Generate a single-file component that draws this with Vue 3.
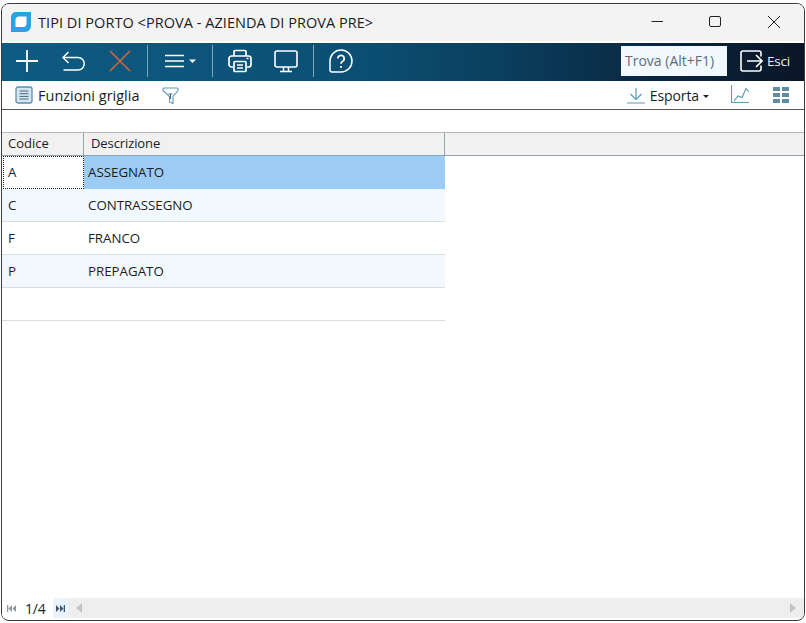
<script setup>
const rows = [
  { code: 'A', text: 'ASSEGNATO' },
  { code: 'C', text: 'CONTRASSEGNO' },
  { code: 'F', text: 'FRANCO' },
  { code: 'P', text: 'PREPAGATO' },
  { code: '', text: '' },
]
</script>

<template>
  <div class="window">
    <header class="titlebar">
      <svg class="logo" width="20" height="20" viewBox="0 0 20 20">
        <path fill="#2aa3e6" d="M5 0h15v14a6 6 0 0 1-6 6H0V5a5 5 0 0 1 5-5z" />
        <path fill="#fff" d="M8 4.500h7.500v7a3.500 3.500 0 0 1-3.500 3.500H4.500V8A3.500 3.500 0 0 1 8 4.500z" />
      </svg>
      <span class="title">TIPI DI PORTO &lt;PROVA - AZIENDA DI PROVA PRE&gt;</span>
      <div class="winctl">
        <svg width="14" height="14" viewBox="0 0 14 14"><path d="M2.500 6.500H14" stroke="#222" fill="none" /></svg>
        <svg width="14" height="14" viewBox="0 0 14 14"><rect x="1.500" y="1.500" width="11" height="10" rx="1.500" stroke="#222" fill="none" /></svg>
        <svg width="14" height="14" viewBox="0 0 14 14"><path d="M1 1l12 12M13 1L1 13" stroke="#222" fill="none" /></svg>
      </div>
    </header>

    <nav class="toolbar">
      <svg class="t-plus" width="24" height="24" viewBox="0 0 24 24"><path d="M12 1v22M1 12h22" stroke="#fff" stroke-width="1.800" fill="none" /></svg>
      <svg class="t-undo" width="24" height="22" viewBox="0 0 24 22"><path d="M6.500 2L1 7.500l5.500 5.500M1 7.500h15a6.250 6.250 0 0 1 0 12.500H1.500" stroke="#fff" stroke-width="1.500" fill="none" /></svg>
      <svg class="t-x" width="22" height="22" viewBox="0 0 22 22"><path d="M1 1l20 20M21 1L1 21" stroke="#d2683a" stroke-width="1.600" fill="none" /></svg>
      <i class="sep sep1"></i>
      <svg class="t-menu" width="32" height="14" viewBox="0 0 32 14"><path d="M0 1.500h19M0 7h19M0 12.500h19" stroke="#fff" stroke-width="1.400" fill="none" /><path d="M24 5.500h7l-3.500 3.500z" fill="#fff" /></svg>
      <i class="sep sep2"></i>
      <svg class="t-print" width="24" height="24" viewBox="0 0 24 24" fill="none" stroke="#fff" stroke-width="1.700"><path d="M6 7V2.500a1 1 0 0 1 1-1h10a1 1 0 0 1 1 1V7" /><path d="M6 18H3.500A2.500 2.500 0 0 1 1 15.500V9.500A2.500 2.500 0 0 1 3.500 7h17A2.500 2.500 0 0 1 23 9.500v6a2.500 2.500 0 0 1-2.500 2.500H18" /><rect x="6" y="12.500" width="12" height="10" rx="1" /><path d="M9 16h6M9 19h6" stroke-width="1.300" /><path d="M18.500 9.500h2" /></svg>
      <svg class="t-monitor" width="24" height="23" viewBox="0 0 24 23" fill="none" stroke="#fff" stroke-width="1.600"><rect x="1" y="1" width="22" height="16" rx="2" /><path d="M9.500 17v4M14.500 17v4M6 21.500h12" /></svg>
      <i class="sep sep3"></i>
      <svg class="t-help" width="24" height="24" viewBox="0 0 24 24" fill="none" stroke="#fff" stroke-width="1.500"><path d="M12 1a11 11 0 0 1 0 22H3a2 2 0 0 1-2-2V12A11 11 0 0 1 12 1z" /><path d="M8.800 9.500a3.200 3.200 0 1 1 4.800 2.800c-1 .6-1.600 1.200-1.600 2.500" stroke-width="1.800" /><path d="M12 17v1.800" stroke-width="2" /></svg>
      <div class="find">Trova (Alt+F1)</div>
      <svg class="t-exit" width="23" height="22" viewBox="0 0 23 22" fill="none" stroke="#fff" stroke-width="1.600"><path d="M21 6.500V3a2 2 0 0 0-2-2H3a2 2 0 0 0-2 2v16a2 2 0 0 0 2 2h16a2 2 0 0 0 2-2v-3.500" /><path d="M7 11h15M16 5l6 6-6 6" /></svg>
      <span class="esci">Esci</span>
    </nav>

    <div class="subbar">
      <svg class="s-grid" width="18" height="18" viewBox="0 0 18 18" fill="none"><rect x="1" y="1" width="16" height="16" rx="2" fill="#d5e6ef" stroke="#5d8fa8" stroke-width="1.300" /><path d="M4.500 5h9M4.500 7.700h9M4.500 10.400h9M4.500 13h9" stroke="#44697e" /></svg>
      <span class="s-label">Funzioni griglia</span>
      <svg class="s-filter" width="17" height="17" viewBox="0 0 17 17" fill="none" stroke="#5a9ab8" stroke-width="1.100"><path d="M2 1h13a1 1 0 0 1 1 1v1.500L11 9.500v7l-3.500-1.500V9.500L1 3.500V2a1 1 0 0 1 1-1z" /><path d="M6.500 7h4M8.500 7v5" stroke="#44697e" /></svg>
      <svg class="s-down" width="18" height="17" viewBox="0 0 18 17" fill="none" stroke="#5a9ab8" stroke-width="1.200"><path d="M9 1v11M3.500 7L9 12.500 14.500 7" /><path d="M0 16h18" /></svg>
      <span class="s-export">Esporta</span>
      <i class="caret"></i>
      <svg class="s-chart" width="19" height="18" viewBox="0 0 19 18" fill="none" stroke="#5a9ab8" stroke-width="1.100"><path d="M.5 0v17.500H18" /><path d="M3 16l4-5 4 1.500L15 3.500 18 7" /></svg>
      <svg class="s-tiles" width="16" height="16" viewBox="0 0 16 16" fill="#5c8da5"><rect x="0" y="0" width="7" height="4" /><rect x="9" y="0" width="7" height="4" /><rect x="0" y="6" width="7" height="4" /><rect x="9" y="6" width="7" height="4" /><rect x="0" y="12" width="7" height="4" /><rect x="9" y="12" width="7" height="4" /></svg>
    </div>

    <main class="content">
      <div class="head">
        <div class="hc hc1">Codice</div>
        <div class="hc hc2">Descrizione</div>
        <div class="hc hc3"></div>
      </div>
      <div v-for="(r, i) in rows" :key="i" class="row" :class="{ odd: i % 2 === 1, first: i === 0 }">
        <div class="cell code">{{ r.code }}</div>
        <div class="cell desc">{{ r.text }}</div>
      </div>
    </main>

    <footer class="status">
      <div class="pager">
        <svg class="n-first" width="9" height="7" viewBox="0 0 9 7" fill="#8d969c"><path d="M0 0h1.300v7H0zM5 0v7L1.500 3.500zM9 0v7L5.500 3.500z" /></svg>
        <span class="page">1/4</span>
      </div>
      <span class="n-last"><svg width="9" height="7" viewBox="0 0 9 7" fill="#44566a"><path d="M0 0v7l3.500-3.500zM4 0v7l3.500-3.500zM7.700 0H9v7H7.700z" /></svg></span>
      <svg class="n-left" width="6" height="10" viewBox="0 0 6 10" fill="#c0c5c9"><path d="M6 0v10L0 5z" /></svg>
      <svg class="n-right" width="6" height="10" viewBox="0 0 6 10" fill="#c0c5c9"><path d="M0 0v10l6-5z" /></svg>
    </footer>
  </div>
</template>

<style>
html, body { margin: 0; background: #fff; }
</style>

<style scoped>
.window {
  box-sizing: border-box;
  width: 804px;
  height: 618px;
  margin: 3px 0 0 1px;
  border: 1px solid #3c3c3c;
  border-radius: 8px;
  overflow: hidden;
  display: flex;
  flex-direction: column;
  background: #fff;
  font-family: "Open Sans", "Noto Sans", sans-serif;
  color: #1c1c1c;
}
.titlebar {
  height: 37px;
  flex: none;
  background: #f3f3f3;
  display: flex;
  align-items: center;
  padding-left: 9px;
}
.logo { margin-right: 7px; margin-top: -2px; flex: none; }
.title { font-size: 14.500px; letter-spacing: 0.05px; white-space: nowrap; }
.winctl {
  margin-left: auto;
  display: flex;
  gap: 45px;
  padding-right: 23px;
  padding-bottom: 2px;
  align-items: center;
}
.toolbar {
  height: 38px;
  margin-top: 2px;
  padding-bottom: 2px;
  box-sizing: border-box;
  flex: none;
  display: flex;
  align-items: center;
  background: linear-gradient(90deg, #0e5b83 0%, #0b4f73 45%, #0a3f5e 62%, #0a2640 82%, #0a1526 100%);
}
.t-plus { margin-left: 13px; }
.t-undo { margin-left: 23px; }
.t-x { margin-left: 23px; }
.sep { width: 1px; height: 32px; background: #7fa6bc; flex: none; }
.sep1 { margin-left: 16px; }
.t-menu { margin-left: 17px; }
.sep2 { margin-left: 15px; }
.t-print { margin-left: 15px; }
.t-monitor { margin-left: 22px; }
.sep3 { margin-left: 15px; }
.t-help { margin-left: 15px; }
.find {
  margin-left: auto;
  width: 106px;
  height: 30px;
  box-sizing: border-box;
  padding-left: 4px;
  background: #f1f8fe;
  color: #646c72;
  font-size: 14px;
  line-height: 30px;
  white-space: nowrap;
}
.t-exit { margin-left: 13px; }
.esci { color: #f2f2f2; font-size: 13.500px; margin-left: 4px; margin-right: 14px; letter-spacing: -0.2px; }
.subbar {
  height: 28px;
  flex: none;
  box-sizing: content-box;
  display: flex;
  align-items: center;
  border-bottom: 1px solid #555;
  font-size: 14.500px;
}
.s-grid { margin-left: 13px; }
.s-label { margin-left: 5px; white-space: nowrap; }
.s-filter { margin-left: 23px; }
.s-down { margin-left: auto; }
.s-export { margin-left: 5px; font-size: 14px; letter-spacing: -0.1px; }
.caret {
  width: 0;
  height: 0;
  margin-left: 4px;
  margin-top: 2px;
  border-left: 3px solid transparent;
  border-right: 3px solid transparent;
  border-top: 3px solid #222;
}
.s-chart { margin-left: 22px; margin-top: -3px; }
.s-tiles { margin-left: 23px; margin-right: 15px; }
.content { flex: 1; padding-top: 22px; }
.head {
  display: flex;
  height: 24px;
  box-sizing: border-box;
  border-top: 1px solid #b0b8bd;
  border-bottom: 1px solid #8fa3b0;
  background: #f1f1f1;
  font-size: 13px;
  line-height: 21px;
}
.hc { box-sizing: border-box; border-right: 1px solid #9aa6ae; flex: none; }
.hc1 { width: 82px; padding-left: 6px; }
.hc2 { width: 361px; padding-left: 7px; letter-spacing: -0.1px; }
.hc3 { flex: 1; border-right: 0; }
.row {
  display: flex;
  width: 443px;
  height: 33px;
  box-sizing: border-box;
  border-bottom: 1px solid #d9dee1;
  font-size: 13.300px;
  line-height: 32px;
}
.row.odd { background: #f1f9fe; }
.cell { box-sizing: border-box; flex: none; }
.code { width: 81px; padding-left: 5px; margin-left: 1px; }
.desc { width: 361px; padding-left: 4px; }
.first { border-bottom-color: transparent; }
.first .code { border: 1px dotted #222; line-height: 30px; padding-left: 4px; height: 33px; background: #fff; }
.first .desc { background: #9ccbf3; height: 33px; }
.status {
  height: 20px;
  flex: none;
  margin-bottom: 2px;
  display: flex;
  align-items: center;
  background: #eeeeee;
}
.pager {
  width: 51px;
  align-self: stretch;
  background: #fff;
  display: flex;
  align-items: center;
  flex: none;
}
.n-first { margin-left: 5px; }
.page {
  margin-left: 9px;
  font-size: 14px;
  letter-spacing: -0.2px;
}
.n-last {
  width: 15px;
  align-self: stretch;
  background: #e9f4fc;
  display: flex;
  align-items: center;
  justify-content: center;
}
.n-left { margin-left: 8px; }
.n-right { margin-left: auto; margin-right: 8px; }
</style>
